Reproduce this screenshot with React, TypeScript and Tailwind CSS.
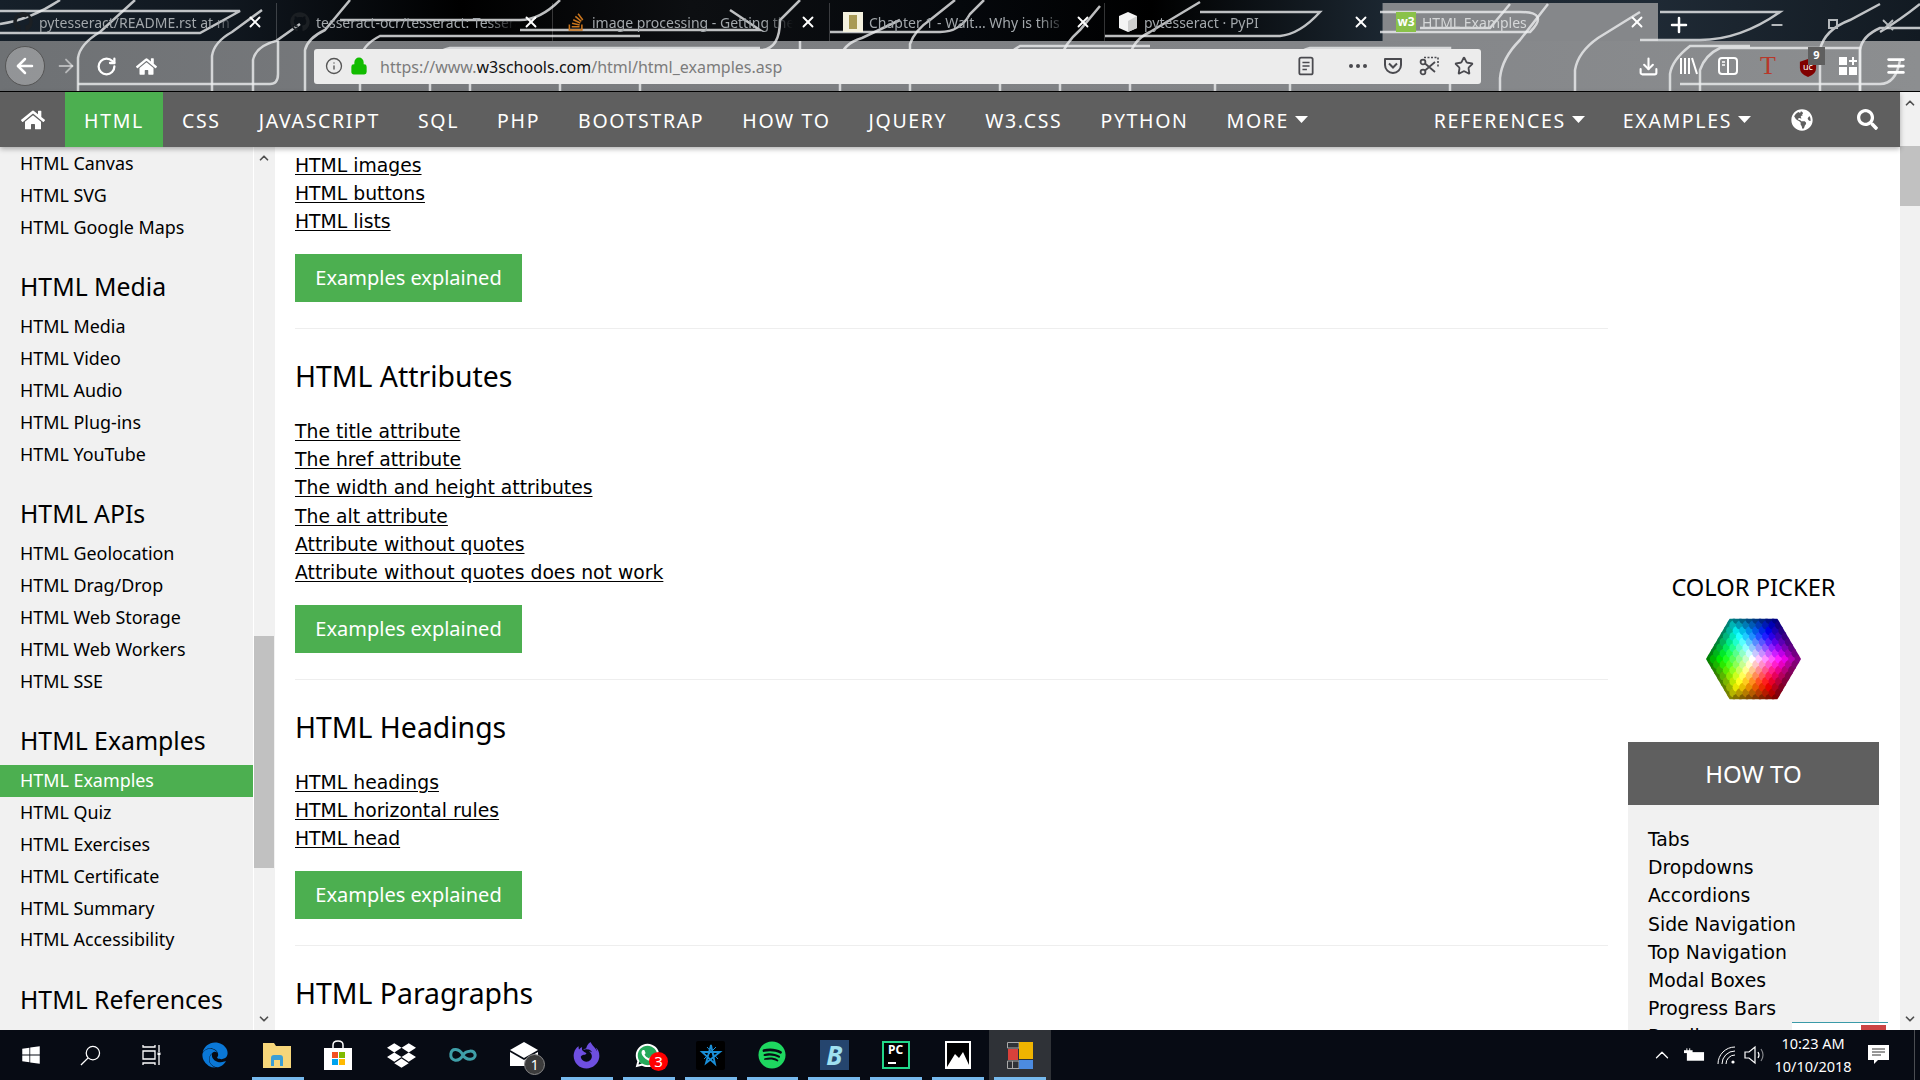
import {
  ArrowLeft,
  ArrowRight,
  ChevronDown,
  ChevronUp,
  Download,
  Info,
  Lock,
  Menu,
  Minus,
  Plus,
  RotateCw,
  Star,
  X,
} from "lucide-react";
import {
  FaDropbox,
  FaEdge,
  FaFirefoxBrowser,
  FaGithub,
  FaGlobeAmericas,
  FaHome,
  FaSearch,
  FaSpotify,
  FaStackOverflow,
  FaWhatsapp,
  FaWindows,
} from "react-icons/fa";

const sans = "font-['Noto_Sans','Open_Sans',sans-serif]";
const verdana = "font-['DejaVu_Sans',sans-serif]";

const lines = [
  "M78 91 V58 Q80 44 100 32 L135 0",
  "M78 84 H270 Q278 84 278 74 V41",
  "M212 91 V56 Q214 42 232 32 L262 10",
  "M253 91 V60 Q256 46 276 41 L300 24",
  "M305 91 V50 Q308 38 325 30 L350 0",
  "M0 33 H200 L240 11 H0",
  "M0 24 Q30 20 60 0",
  "M340 20 H520 Q540 20 560 0",
  "M360 91 V60 Q362 45 380 36 H640",
  "M470 91 V76 Q472 62 490 55 H620",
  "M430 91 V66 Q432 52 450 48 H760",
  "M520 30 H760 L730 10",
  "M640 91 V50 H760 Q780 50 780 20 L800 0",
  "M560 91 V82 H790 Q800 82 800 60 V41",
  "M830 32 H940 Q960 32 970 14 L984 0",
  "M840 91 V60 Q842 44 862 38 L900 20",
  "M910 91 V44 Q915 30 930 20 L955 0",
  "M1000 91 V70 Q1002 56 1020 46 H1150",
  "M1060 91 V60 Q1064 44 1080 30 L1100 6",
  "M1105 36 H1280 Q1300 34 1320 12 H1200",
  "M1130 91 V56 Q1133 40 1150 32 L1200 2",
  "M1215 91 V70 Q1218 58 1236 54 H1410",
  "M1290 91 V66 Q1294 52 1310 48 H1450 V91",
  "M1380 12 H1520 Q1550 12 1530 32 H1380",
  "M1500 91 V78 Q1502 58 1520 40 L1548 4",
  "M1420 28 H1490 L1510 4",
  "M1575 91 V70 Q1578 52 1598 38 L1640 12",
  "M1640 40 H1700 Q1740 40 1780 12 H1660",
  "M1670 91 V74 Q1672 60 1690 46 H1750",
  "M1680 84 H1880 Q1896 84 1900 60",
  "M1700 91 V70 Q1705 55 1720 48 H1860 V91",
  "M1820 91 V50 Q1824 30 1850 20 L1880 4",
  "M1860 91 V50 Q1862 36 1880 28 H1920",
  "M1880 32 Q1900 20 1920 4",
];

const Backdrop = () => (
  <svg
    className="absolute inset-0 h-full w-full"
    viewBox="0 0 1920 91"
    preserveAspectRatio="none"
  >
    <defs>
      <linearGradient id="strip" x1="0" x2="1" y1="0" y2="0">
        <stop offset="0" stopColor="#16202a" />
        <stop offset="0.12" stopColor="#10171f" />
        <stop offset="0.24" stopColor="#000000" />
        <stop offset="0.36" stopColor="#0d0f12" />
        <stop offset="0.5" stopColor="#05080c" />
        <stop offset="0.6" stopColor="#000000" />
        <stop offset="0.72" stopColor="#1b2630" />
        <stop offset="0.86" stopColor="#1f2a35" />
        <stop offset="1" stopColor="#121a22" />
      </linearGradient>
      <linearGradient id="bar" x1="0" x2="1" y1="0" y2="0">
        <stop offset="0" stopColor="#6e7174" />
        <stop offset="0.2" stopColor="#77797c" />
        <stop offset="0.75" stopColor="#85878a" />
        <stop offset="1" stopColor="#8c8e90" />
      </linearGradient>
    </defs>
    <rect width="1920" height="41" fill="url(#strip)" />
    <rect y="41" width="1920" height="50" fill="url(#bar)" />
    <rect x="1383" y="3" width="275" height="38" fill="#85878a" />
    {lines.map((d) => (
      <path key={d} d={d} fill="none" stroke="#eceeef" strokeWidth="2.5" opacity="0.8" />
    ))}
  </svg>
);

interface TabType {
  title: string;
  icon: React.ReactNode;
  width: string;
  active?: boolean;
}

const tabs: TabType[] = [
  { title: "pytesseract/README.rst at m", width: "w-[277px]", icon: <FaGithub className="size-[20px] text-[#1b1f23]" /> },
  { title: "tesseract-ocr/tesseract: Tessera", width: "w-[276px]", icon: <FaGithub className="size-[20px] text-[#1b1f23]" /> },
  { title: "image processing - Getting the", width: "w-[277px]", icon: <FaStackOverflow className="size-[20px] text-[#c8741d]" /> },
  {
    title: "Chapter 1 - Wait... Why is this",
    width: "w-[275px]",
    icon: (
      <div className="h-[20px] w-[20px] bg-[#f4f1de] flex items-center justify-center">
        <div className="h-[14px] w-[8px] bg-[#a89a55]" />
      </div>
    ),
  },
  {
    title: "pytesseract · PyPI",
    width: "w-[278px]",
    icon: (
      <svg viewBox="0 0 20 20" className="size-[20px]">
        <path d="M10 0 L19 4 V16 L10 20 L1 16 V4 Z" fill="#f4f4f4" />
        <path d="M10 9 L19 4 V16 L10 20 Z" fill="#cfcfcf" />
      </svg>
    ),
  },
  {
    title: "HTML Examples",
    width: "w-[275px]",
    active: true,
    icon: (
      <div className="h-[20px] w-[20px] bg-[#8ac249] text-white text-[12px] leading-[20px] text-center font-bold">
        w3
      </div>
    ),
  },
];

const Tab = ({ title, icon, width, active }: TabType) => (
  <div
    className={`${width} shrink-0 flex items-center pl-[13px] pr-[12px] gap-[6px] mt-[3px] h-[38px] ${
      active ? "" : "border-r border-white/20"
    }`}
  >
    <span className="shrink-0">{icon}</span>
    <span
      className={`flex-1 overflow-hidden whitespace-nowrap text-[14px] [mask-image:linear-gradient(to_right,black_85%,transparent)] ${
        active ? "text-[#d5d7d8]" : "text-[#a2a7ab]"
      }`}
    >
      {title}
    </span>
    <X className="size-[18px] text-white shrink-0" strokeWidth={2.5} />
  </div>
);

const TabStrip = () => (
  <div className={`relative flex h-[41px] ${sans}`}>
    {tabs.map((t) => (
      <Tab key={t.title} {...t} />
    ))}
    <Plus className="size-[24px] text-white ml-[9px] mt-[13px]" strokeWidth={2.5} />
    <Minus className="size-[16px] text-[#b5b9bc] ml-[78px] mt-[17px]" strokeWidth={3} />
    <div className="ml-[43px] mt-[19px] size-[10px] border-2 border-[#b5b9bc]" />
    <X className="size-[18px] text-[#b5b9bc] ml-[41px] mt-[16px]" strokeWidth={2.4} />
  </div>
);

const ToolbarCell = ({ children }: { children: React.ReactNode }) => (
  <div className="w-[40px] flex items-center justify-center relative">{children}</div>
);

const Toolbar = () => (
  <div className={`relative flex h-[50px] items-center ${sans}`}>
    <div className="ml-[5px] size-[40px] rounded-full bg-white/25 border border-[#555] flex items-center justify-center">
      <ArrowLeft className="size-[24px] text-white" strokeWidth={2.5} />
    </div>
    <ArrowRight className="size-[22px] text-white/50 ml-[10px]" strokeWidth={2} />
    <RotateCw className="size-[21px] text-white ml-[19px]" strokeWidth={2.6} />
    <FaHome className="size-[21px] text-white ml-[19px]" />
    <div className="ml-[157px] flex h-[35px] w-[1167px] items-center rounded-[3px] bg-[#ececec] text-[16px]">
      <Info className="size-[18px] text-[#555] ml-[11px]" strokeWidth={1.8} />
      <Lock className="size-[18px] text-[#12bc00] fill-[#12bc00] ml-[7px]" strokeWidth={2.4} />
      <span className="ml-[12px] mt-[2px] text-[#7c7c7c]">
        https://www.<span className="text-[#111]">w3schools.com</span>/html/html_examples.asp
      </span>
      <div className="ml-auto flex items-center text-[#4a4a4f]">
        <svg viewBox="0 0 18 22" className="h-[20px] w-[16px] mr-[35px]">
          <rect x="1.5" y="1.5" width="15" height="19" rx="2" fill="none" stroke="#4a4a4f" strokeWidth="2" />
          <path d="M5 7 H13 M5 11 H13 M5 15 H10" stroke="#4a4a4f" strokeWidth="1.6" />
        </svg>
        <span className="flex gap-[3px] mr-[16px]">
          <i className="size-[4px] rounded-full bg-[#4a4a4f]" />
          <i className="size-[4px] rounded-full bg-[#4a4a4f]" />
          <i className="size-[4px] rounded-full bg-[#4a4a4f]" />
        </span>
        <svg viewBox="0 0 20 20" className="size-[20px] mr-[16px]">
          <path d="M2 3 H18 V9 A8 8 0 0 1 2 9 Z" fill="none" stroke="#4a4a4f" strokeWidth="2" strokeLinejoin="round" />
          <path d="M6 7.5 L10 11.5 L14 7.5" fill="none" stroke="#4a4a4f" strokeWidth="2" />
        </svg>
        <svg viewBox="0 0 20 20" className="size-[20px] mr-[15px]">
          <path d="M5 1.5 H19 V11" fill="none" stroke="#4a4a4f" strokeWidth="1.6" strokeDasharray="2 1.5" />
          <circle cx="4" cy="6" r="2.4" fill="none" stroke="#4a4a4f" strokeWidth="1.8" />
          <circle cx="4" cy="16" r="2.4" fill="none" stroke="#4a4a4f" strokeWidth="1.8" />
          <path d="M6 7.5 L16 16 M6 14.5 L16 6" stroke="#4a4a4f" strokeWidth="1.8" />
        </svg>
        <Star className="size-[20px] mr-[7px]" strokeWidth={2.2} />
      </div>
    </div>
    <div className="ml-[147px] flex h-full">
      <ToolbarCell>
        <Download className="size-[21px] text-white" strokeWidth={2.4} />
      </ToolbarCell>
      <ToolbarCell>
        <svg viewBox="0 0 20 20" className="size-[20px]">
          <path d="M3 2 V18 M7 2 V18 M11 2 V18 M14 2 L19 18" stroke="white" strokeWidth="2" fill="none" />
        </svg>
      </ToolbarCell>
      <ToolbarCell>
        <svg viewBox="0 0 20 20" className="size-[20px]">
          <rect x="1" y="2" width="18" height="16" rx="3" fill="none" stroke="white" strokeWidth="2" />
          <path d="M10 2 V18" stroke="white" strokeWidth="2" />
          <path d="M4 6 H7 M4 9 H7" stroke="white" strokeWidth="1.5" />
        </svg>
      </ToolbarCell>
      <ToolbarCell>
        <span className="text-[26px] leading-none font-['Liberation_Serif',serif] text-[#b8382a]">T</span>
      </ToolbarCell>
      <ToolbarCell>
        <div className="relative h-[22px] w-[18px] mt-[4px]">
          <svg viewBox="0 0 20 22" className="h-[22px] w-[18px]">
            <path d="M10 1 L19 4 V11 Q19 18 10 21 Q1 18 1 11 V4 Z" fill="#800000" />
          </svg>
          <span className="absolute inset-x-0 top-[4px] text-center text-white text-[9px] leading-[12px]">uc</span>
        </div>
        <span className="absolute right-[3px] top-[6px] h-[18px] w-[17px] bg-[#5f5f5f] text-white text-[11px] leading-[16px] text-center font-bold">
          9
        </span>
      </ToolbarCell>
      <ToolbarCell>
        <svg viewBox="0 0 20 20" className="size-[20px]">
          <path d="M1 1 H9 V9 H1 Z M1 11 H9 V19 H1 Z M11 11 H19 V19 H11 Z" fill="white" />
          <path d="M15 1 V9 M11 5 H19" stroke="white" strokeWidth="2" />
        </svg>
      </ToolbarCell>
      <Menu className="size-[22px] text-white ml-[17px] self-center" strokeWidth={3} />
    </div>
  </div>
);

const navItems = ["CSS", "JAVASCRIPT", "SQL", "PHP", "BOOTSTRAP", "HOW TO", "JQUERY", "W3.CSS", "PYTHON"];

const NavItem = ({ label, caret }: { label: string; caret?: boolean }) => (
  <div className="px-[19px] flex items-center gap-[6px] whitespace-nowrap">
    <span className="pt-[2px]">{label}</span>
    {caret && (
      <svg viewBox="0 0 13 7" className="h-[7px] w-[13px]">
        <path d="M0 0 H13 L6.5 7 Z" fill="white" />
      </svg>
    )}
  </div>
);

const TopNav = () => (
  <div className={`relative z-10 flex h-[55px] shrink-0 items-center bg-[#5f5f5f] text-white text-[19.5px] tracking-[1.65px] shadow-[0_2px_5px_rgba(0,0,0,0.3)] ${sans}`}>
    <div className="w-[65px] flex justify-center">
      <FaHome className="size-[24px]" />
    </div>
    <div className="h-full w-[98px] bg-[#4caf50] flex items-center justify-center pt-[2px]">HTML</div>
    {navItems.map((n) => (
      <NavItem key={n} label={n} />
    ))}
    <NavItem label="MORE" caret />
    <div className="ml-auto flex h-full items-center">
      <NavItem label="REFERENCES" caret />
      <NavItem label="EXAMPLES" caret />
      <div className="w-[64px] flex justify-center">
        <FaGlobeAmericas className="size-[22px]" />
      </div>
      <div className="w-[66px] flex justify-center">
        <FaSearch className="size-[21px]" />
      </div>
    </div>
  </div>
);

const sideGroups = [
  { items: ["HTML Canvas", "HTML SVG", "HTML Google Maps"] },
  { title: "HTML Media", items: ["HTML Media", "HTML Video", "HTML Audio", "HTML Plug-ins", "HTML YouTube"] },
  { title: "HTML APIs", items: ["HTML Geolocation", "HTML Drag/Drop", "HTML Web Storage", "HTML Web Workers", "HTML SSE"] },
  {
    title: "HTML Examples",
    items: ["HTML Examples", "HTML Quiz", "HTML Exercises", "HTML Certificate", "HTML Summary", "HTML Accessibility"],
  },
  { title: "HTML References", items: [] },
];

const Sidebar = () => (
  <div className={`flex w-[275px] shrink-0 bg-[#f1f1f1] text-black ${sans}`}>
    <div className="w-[254px] overflow-hidden border-r border-white pt-[1px]">
      {sideGroups.map((g, i) => (
        <div key={i}>
          {g.title && <div className="px-[20px] h-[44px] mt-[21px] mb-[3px] leading-[44px] text-[24.8px]">{g.title}</div>}
          {g.items.map((item) => (
            <div
              key={item}
              className={`px-[20px] h-[31.8px] leading-[31.8px] text-[17.9px] ${
                item === "HTML Examples" ? "bg-[#4caf50] text-white" : ""
              }`}
            >
              {item}
            </div>
          ))}
        </div>
      ))}
    </div>
    <div className="w-[20px] flex flex-col items-center">
      <ChevronUp className="size-[14px] text-[#505050] mt-[4px]" strokeWidth={3} />
      <div className="mt-[471px] h-[232px] w-full bg-[#c1c1c1]" />
      <ChevronDown className="size-[14px] text-[#505050] mt-auto mb-[4px]" strokeWidth={3} />
    </div>
  </div>
);

const sections = [
  { links: ["HTML images", "HTML buttons", "HTML lists"] },
  {
    title: "HTML Attributes",
    links: [
      "The title attribute",
      "The href attribute",
      "The width and height attributes",
      "The alt attribute",
      "Attribute without quotes",
      "Attribute without quotes does not work",
    ],
  },
  { title: "HTML Headings", links: ["HTML headings", "HTML horizontal rules", "HTML head"] },
  { title: "HTML Paragraphs", links: [] },
];

const Main = () => (
  <div className="w-[1333px] shrink-0 overflow-hidden pl-[20px] pt-[5px] text-black">
    {sections.map((s, i) => (
      <div key={i}>
        {s.title && <div className={`mt-[25px] h-[44px] leading-[44px] text-[28.4px] ${sans}`}>{s.title}</div>}
        {s.title && s.links.length > 0 && <div className="h-[20px]" />}
        {s.links.map((l) => (
          <div key={l} className={`h-[28.1px] leading-[28.1px] text-[18.8px] underline underline-offset-2 ${verdana}`}>
            {l}
          </div>
        ))}
        {s.links.length > 0 && (
          <>
            <div className={`mt-[18px] flex h-[48px] w-[227px] items-center justify-center bg-[#4caf50] text-white text-[20px] ${sans}`}>
              Examples explained
            </div>
            <div className="mt-[26px] h-px bg-[#eeeeee]" />
          </>
        )}
      </div>
    ))}
  </div>
);

const hexes: { x: number; y: number; fill: string }[] = [];
for (let q = -7; q <= 7; q++) {
  for (let r = -7; r <= 7; r++) {
    if (Math.abs(q + r) > 7) continue;
    const x = 6.6 * (q + r / 2);
    const y = 5.7 * r;
    const d = Math.max(Math.abs(q), Math.abs(r), Math.abs(q + r)) / 7;
    const angle = (Math.atan2(-y, x) * 180) / Math.PI;
    const hue = (300 - angle + 360) % 360;
    const light = d < 0.65 ? 100 - d * 77 : 50 - (d - 0.65) * 70;
    hexes.push({ x, y, fill: `hsl(${hue} 100% ${light}%)` });
  }
}

const ColorHex = () => (
  <svg viewBox="-49 -41 98 82" className="h-[82px] w-[97px]">
    <defs>
      <clipPath id="hexclip">
        <path d="M-48 0 L-24 -41 H24 L48 0 L24 41 H-24 Z" />
      </clipPath>
    </defs>
    <g clipPath="url(#hexclip)">
      {hexes.map((h, i) => (
        <circle key={i} cx={h.x} cy={h.y} r="4.6" fill={h.fill} />
      ))}
    </g>
  </svg>
);

const howTo = ["Tabs", "Dropdowns", "Accordions", "Side Navigation", "Top Navigation", "Modal Boxes", "Progress Bars", "Parallax"];

const RightCol = () => (
  <div className="w-[251px] shrink-0 ml-[20px] pt-[424px] text-black overflow-hidden">
    <div className={`h-[32px] leading-[32px] text-center text-[23.7px] ${sans}`}>COLOR PICKER</div>
    <div className="mt-[15px] flex justify-center">
      <ColorHex />
    </div>
    <div className={`mt-[42px] h-[63px] bg-[#5f5f5f] text-white flex items-center justify-center text-[24px] ${sans}`}>
      HOW TO
    </div>
    <div className={`h-[400px] bg-[#f1f1f1] pl-[20px] pt-[21px] text-[18.8px] ${verdana}`}>
      {howTo.map((h) => (
        <div key={h} className="h-[28.2px] leading-[28.2px]">
          {h}
        </div>
      ))}
    </div>
  </div>
);

const PageScroll = () => (
  <div className="w-[20px] shrink-0 bg-[#f1f1f1] flex flex-col items-center">
    <ChevronUp className="size-[14px] text-[#505050] mt-[4px]" strokeWidth={3} />
    <div className="mt-[36px] h-[60px] w-full bg-[#c1c1c1]" />
    <ChevronDown className="size-[14px] text-[#505050] mt-auto mb-[4px]" strokeWidth={3} />
  </div>
);

const TaskIcon = ({
  children,
  run,
  active,
  badge,
}: {
  children?: React.ReactNode;
  run?: boolean;
  active?: boolean;
  badge?: React.ReactNode;
}) => (
  <div className={`relative w-[61.8px] h-[50px] shrink-0 flex items-center justify-center ${active ? "bg-[#2f3237]" : ""}`}>
    {children}
    {badge}
    {run && <div className="absolute bottom-0 inset-x-[5px] h-[3px] bg-[#76b9ed]" />}
  </div>
);

const Taskbar = () => (
  <div className={`relative z-20 flex h-[50px] shrink-0 items-center bg-[#070b14] text-white ${sans}`}>
    <TaskIcon>
      <FaWindows className="size-[20px]" />
    </TaskIcon>
    <TaskIcon>
      <svg viewBox="0 0 22 22" className="size-[21px] mr-[4px]">
        <circle cx="13.5" cy="8.5" r="7" fill="none" stroke="white" strokeWidth="1.3" />
        <path d="M8.5 13.5 L1 21" stroke="white" strokeWidth="1.4" />
      </svg>
    </TaskIcon>
    <TaskIcon>
      <svg viewBox="0 0 20 20" className="size-[20px] mr-[4px]">
        <path d="M1 0 V2 H13 V0 M1 6 H13 V14 H1 Z M1 20 V18 H13 V20 M17 0 V7 M17 10 V20" fill="none" stroke="white" strokeWidth="1.3" />
        <rect x="15.5" y="7.5" width="3" height="2.5" fill="white" />
      </svg>
    </TaskIcon>
    <TaskIcon>
      <FaEdge className="size-[26px] text-[#0a78d7] mr-[2px]" />
    </TaskIcon>
    <TaskIcon run>
      <svg viewBox="0 0 28 26" className="h-[26px] w-[28px] mr-[3px]">
        <path d="M0 1 H11 L13 4 H28 V26 H0 Z" fill="#f6d67a" />
        <path d="M8 24 V16 Q8 13 11 13 H17 Q20 13 20 16 V24 H17 V18 H11 V24 Z" fill="#3a9fd6" />
      </svg>
    </TaskIcon>
    <TaskIcon>
      <svg viewBox="0 0 28 30" className="h-[30px] w-[28px] mr-[3px]">
        <path d="M9 9 V5 Q9 1 14 1 Q19 1 19 5 V9" fill="none" stroke="white" strokeWidth="1.5" />
        <rect x="0" y="8" width="28" height="22" fill="white" />
        <rect x="8" y="12" width="6" height="6" fill="#f25022" />
        <rect x="15" y="12" width="6" height="6" fill="#7fba00" />
        <rect x="8" y="19" width="6" height="6" fill="#00a4ef" />
        <rect x="15" y="19" width="6" height="6" fill="#ffb900" />
      </svg>
    </TaskIcon>
    <TaskIcon>
      <FaDropbox className="size-[29px] mr-[1px]" />
    </TaskIcon>
    <TaskIcon>
      <svg viewBox="0 0 32 20" className="h-[20px] w-[30px]">
        <path d="M16 10 C12 3 4 2 3 9 C2 17 12 18 16 10 C19 5 28 4 29 10 C29 16 19 16 16 10" fill="none" stroke="#3f9fa8" strokeWidth="3.2" />
      </svg>
    </TaskIcon>
    <TaskIcon
      badge={
        <span className="absolute left-[30px] top-[24px] size-[21px] rounded-full bg-[#3c3c3c] border border-[#888] text-[14px] leading-[19px] text-center">
          1
        </span>
      }
    >
      <svg viewBox="0 0 28 24" className="h-[24px] w-[28px] -mt-[2px] mr-[2px]">
        <path d="M0 8 L14 0 L28 8 L14 16 Z" fill="white" />
        <path d="M0 10 L14 18 L28 10 V24 H0 Z" fill="white" />
      </svg>
    </TaskIcon>
    <TaskIcon run>
      <FaFirefoxBrowser className="size-[27px] text-[#6e4fe0] mr-[2px]" />
    </TaskIcon>
    <TaskIcon
      run
      badge={
        <span className="absolute left-[31px] top-[22px] size-[19px] rounded-full bg-[#f00] text-[15px] leading-[19px] text-center">
          3
        </span>
      }
    >
      <div className="relative size-[27px] mr-[2px]">
        <div className="absolute inset-[3px] rounded-full bg-[#25a85a]" />
        <FaWhatsapp className="absolute inset-0 size-[27px]" />
      </div>
    </TaskIcon>
    <TaskIcon run>
      <div className="size-[29px] bg-black rounded-[2px] flex items-center justify-center">
        <svg viewBox="0 0 24 24" className="size-[24px]">
          <path d="M12 2 L16 21 L3 9 H21 L7 20 Z" fill="none" stroke="#1a8fd8" strokeWidth="1.8" />
          <path d="M8 4 L19 16 M5 16 L17 4" fill="none" stroke="#1a8fd8" strokeWidth="1" />
        </svg>
      </div>
    </TaskIcon>
    <TaskIcon run>
      <FaSpotify className="size-[28px] text-[#1ed760]" />
    </TaskIcon>
    <TaskIcon run>
      <div className="h-[30px] w-[29px] bg-[#25456e] text-[#9fe0f0] flex items-center justify-center italic font-bold text-[26px]">B</div>
    </TaskIcon>
    <TaskIcon run>
      <div className="size-[28px] bg-black border-2 border-[#21d789] text-white text-[12px] font-bold leading-[14px] pl-[4px]">
        PC
        <div className="h-[2px] w-[8px] bg-white mt-[5px]" />
      </div>
    </TaskIcon>
    <TaskIcon run>
      <svg viewBox="0 0 26 28" className="h-[28px] w-[26px]">
        <rect width="26" height="28" fill="white" />
        <rect x="2" y="2" width="22" height="24" fill="black" />
        <path d="M2 26 L10 13 L14 17 L18 11 L24 24 V26 Z" fill="white" />
      </svg>
    </TaskIcon>
    <TaskIcon run active>
      <svg viewBox="0 0 26 27" className="h-[27px] w-[26px]">
        <path d="M0.5 0.5 H12 V6 H0.5 Z M0.5 19 H12 V26.5 H0.5 Z M5.5 19 V26.5" fill="none" stroke="#a9a9a9" />
        <rect x="1" y="7" width="10" height="11" fill="#d9413b" />
        <rect x="12" y="0" width="14" height="17" fill="#f0b400" />
        <rect x="12" y="18" width="14" height="9" fill="#4c8be0" />
      </svg>
    </TaskIcon>
    <div className="ml-auto flex items-center h-full">
      <ChevronUp className="size-[22px]" strokeWidth={1.4} />
      <svg viewBox="0 0 22 14" className="h-[14px] w-[21px] ml-[11px]">
        <rect x="3" y="4" width="18" height="9" fill="white" />
        <path d="M3 0 V3 M6 0 V3" stroke="white" />
        <rect x="0" y="2" width="9" height="3" fill="white" />
      </svg>
      <svg viewBox="0 0 20 20" className="size-[20px] ml-[12px]" fill="none" stroke="white">
        <path d="M1 19 A17 17 0 0 1 18 2" strokeWidth="1" />
        <path d="M5 19 A13 13 0 0 1 18 6" strokeWidth="1" />
        <path d="M9 19 A9 9 0 0 1 18 10" strokeWidth="1" />
        <circle cx="16" cy="17" r="1.6" fill="white" stroke="none" />
      </svg>
      <svg viewBox="0 0 22 20" className="h-[20px] w-[22px] ml-[7px]" fill="none" stroke="white" strokeWidth="1.2">
        <path d="M1 7 H5 L11 2 V18 L5 13 H1 Z" />
        <path d="M14 7 Q16 10 14 13" />
        <path d="M17 4 Q21 10 17 16" opacity="0.5" />
      </svg>
      <div className="w-[88px] ml-[3px] text-center text-[14.5px] leading-[23px]">
        <div>10:23 AM</div>
        <div>10/10/2018</div>
      </div>
      <div className="w-[42px] mr-[15px] flex justify-center">
        <svg viewBox="0 0 21 20" className="h-[20px] w-[21px]">
          <path d="M0 0 H21 V15 H10 L6 19 V15 H0 Z" fill="white" />
          <path d="M4 4 H17 M4 7 H17 M4 10 H13" stroke="#333" />
        </svg>
      </div>
      <div className="h-full w-px bg-[#4a4d52] mr-[5px]" />
    </div>
  </div>
);

export default function App() {
  return (
    <div className="relative flex h-[1080px] w-[1920px] flex-col overflow-hidden bg-white">
      <div className="relative h-[91px] shrink-0 overflow-hidden">
        <Backdrop />
        <TabStrip />
        <Toolbar />
      </div>
      <div className="h-px shrink-0 bg-black" />
      <div className="flex min-h-0 flex-1">
        <div className="flex min-w-0 flex-1 flex-col">
          <TopNav />
          <div className="flex min-h-0 flex-1">
            <Sidebar />
            <Main />
            <RightCol />
          </div>
        </div>
        <PageScroll />
      </div>
      <div className="absolute left-[1792px] top-[1022px] h-[8px] w-[96px] bg-white border-t border-[#3a9aa8] flex justify-end pr-[2px] pt-[2px]">
        <div className="h-[6px] w-[25px] bg-[#c44]" />
      </div>
      <Taskbar />
    </div>
  );
}
